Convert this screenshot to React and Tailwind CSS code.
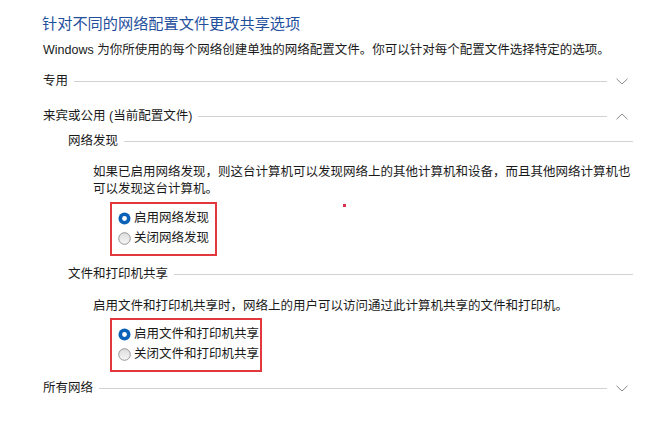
import React from "react";

const font = { fontFamily: "'Liberation Sans', 'Noto Sans CJK SC', sans-serif" };

function ChevronDown() {
  return (
    <svg width="12" height="7" viewBox="0 0 12 7" className="shrink-0 ml-[9px]">
      <path d="M0.5 0.8 L6 6 L11.5 0.8" fill="none" stroke="#8a8a8a" strokeWidth="1" />
    </svg>
  );
}
function ChevronUp() {
  return (
    <svg width="12" height="7" viewBox="0 0 12 7" className="shrink-0 ml-[9px]">
      <path d="M0.5 6.2 L6 1 L11.5 6.2" fill="none" stroke="#8a8a8a" strokeWidth="1" />
    </svg>
  );
}

function Radio({ checked }) {
  return checked ? (
    <svg width="13" height="13" viewBox="0 0 13 13" className="shrink-0 mr-[3px]">
      <circle cx="6.5" cy="6.5" r="6" fill="#0a62b8" />
      <circle cx="6.5" cy="6.5" r="2.4" fill="#ffffff" />
    </svg>
  ) : (
    <svg width="13" height="13" viewBox="0 0 13 13" className="shrink-0 mr-[3px]">
      <defs>
        <linearGradient id="rg" x1="0" y1="0" x2="0" y2="1">
          <stop offset="0" stopColor="#dcdcdc" />
          <stop offset="1" stopColor="#f6f6f6" />
        </linearGradient>
      </defs>
      <circle cx="6.5" cy="6.5" r="5.8" fill="url(#rg)" stroke="#8c8c8c" strokeWidth="0.9" />
    </svg>
  );
}

function MainHeader({ label, up, className = "" }) {
  return (
    <div className={"flex items-center h-4 " + className}>
      <span className="whitespace-nowrap">{label}</span>
      <div className="flex-1 h-px bg-[#d2d2d2] ml-[6px]" />
      {up ? <ChevronUp /> : <ChevronDown />}
    </div>
  );
}

function SubHeader({ label, className = "" }) {
  return (
    <div className={"flex items-center h-4 pl-[25px] -mr-[5px] " + className}>
      <span className="whitespace-nowrap">{label}</span>
      <div className="flex-1 h-px bg-[#d2d2d2] ml-[6px]" />
    </div>
  );
}

function RadioBox({ options, className = "" }) {
  return (
    <div className={"self-start ml-[67px] border-2 border-[#e2373c] pt-[4px] pb-[6px] pl-[6px] text-[12.5px] " + className}>
      {options.map((o, i) => (
        <div key={i} className="flex items-center h-5 whitespace-nowrap">
          <Radio checked={i === 0} />
          <span>{o}</span>
        </div>
      ))}
    </div>
  );
}

export default function App() {
  return (
    <div
      className="relative w-[672px] h-[430px] bg-white overflow-hidden text-[#1a1a1a] text-[12.5px] leading-4 pl-[43px] pr-[44px] pt-[14px] flex flex-col"
      style={font}
    >
      <div className="text-[15.2px] leading-5 text-[#1f4f9d] -ml-[1px] whitespace-nowrap">
        针对不同的网络配置文件更改共享选项
      </div>
      <div className="mt-[8px] whitespace-nowrap">
        Windows 为你所使用的每个网络创建单独的网络配置文件。你可以针对每个配置文件选择特定的选项。
      </div>

      <MainHeader label="专用" className="mt-[15px]" />
      <MainHeader label="来宾或公用 (当前配置文件)" up className="mt-[19px]" />

      <SubHeader label="网络发现" className="mt-[9px]" />
      <p className="mt-[15px] pl-[50px] leading-[17px] whitespace-nowrap">
        如果已启用网络发现，则这台计算机可以发现网络上的其他计算机和设备，而且其他网络计算机也
        <br />
        可以发现这台计算机。
      </p>
      <RadioBox className="mt-[4px] w-[107px]" options={["启用网络发现", "关闭网络发现"]} />

      <SubHeader label="文件和打印机共享" className="mt-[10px]" />
      <p className="mt-[16px] pl-[50px] leading-[17px] whitespace-nowrap">
        启用文件和打印机共享时，网络上的用户可以访问通过此计算机共享的文件和打印机。
      </p>
      <RadioBox className="mt-[3px] w-[152px]" options={["启用文件和打印机共享", "关闭文件和打印机共享"]} />

      <MainHeader label="所有网络" className="mt-[8px]" />

      <div className="absolute left-[343px] top-[204px] w-[3px] h-[3px] bg-[#d9304f]" />
    </div>
  );
}
